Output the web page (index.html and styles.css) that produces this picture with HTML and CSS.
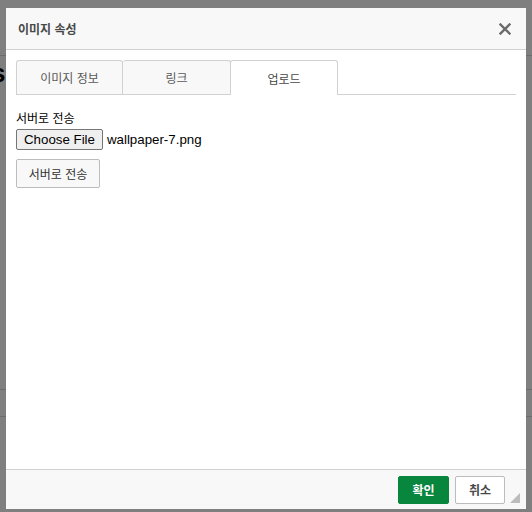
FILE: index.html
```html
<!DOCTYPE html>
<html lang="ko">
<head>
<meta charset="utf-8">
<title>이미지 속성</title>
<link rel="stylesheet" href="styles.css">
</head>
<body>
<div class="page">
  <div class="page-line page-line-top"></div>
  <div class="page-heading">s</div>
  <div class="page-line page-line-a"></div>
  <div class="page-line page-line-b"></div>
</div>
<div class="overlay"></div>
<div class="dialog">
  <div class="dlg-head">
    <span class="dlg-title">이미지 속성</span>
    <svg class="dlg-close" width="12" height="12" viewBox="0 0 12 12"><path d="M1.5 1.5 L10.5 10.5 M10.5 1.5 L1.5 10.5" stroke="#6b6b6b" stroke-width="2.4" stroke-linecap="square"/></svg>
  </div>
  <div class="dlg-body">
    <div class="tabs">
      <div class="tab tab-first">이미지 정보</div>
      <div class="tab">링크</div>
      <div class="tab tab-active">업로드</div>
    </div>
    <div class="panel">
      <div class="field-label">서버로 전송</div>
      <div class="file-row">
        <span class="file-btn">Choose File</span>
        <span class="file-name">wallpaper-7.png</span>
      </div>
      <span class="btn-send">서버로 전송</span>
    </div>
  </div>
  <div class="dlg-foot">
    <span class="btn btn-ok">확인</span>
    <span class="btn btn-cancel">취소</span>
    <span class="resize"></span>
  </div>
</div>
</body>
</html>
```
FILE: styles.css
```css
html, body {
  margin: 0;
  padding: 0;
}
body {
  width: 532px;
  height: 512px;
  overflow: hidden;
  position: relative;
  font-family: "Liberation Sans", Arial, "Noto Sans CJK KR", sans-serif;
  background: #fff;
}
.page {
  position: absolute;
  inset: 0;
}
.page-line {
  position: absolute;
  left: 0;
  right: 0;
  height: 1px;
  background: #d8d8d8;
}
.page-line-top { top: 55px; }
.page-line-a { top: 389px; }
.page-line-b { top: 416px; }
.page-heading {
  position: absolute;
  left: -9px;
  top: 58px;
  font: bold 26px "Liberation Sans", Arial, sans-serif;
  color: #000;
}
.overlay {
  position: absolute;
  inset: 0;
  background: rgba(0, 0, 0, 0.5);
}
.dialog {
  position: absolute;
  left: 6px;
  top: 8px;
  width: 520px;
  height: 501px;
  background: #fff;
  display: flex;
  flex-direction: column;
  font-family: "Liberation Sans", Arial, "Noto Sans CJK KR", sans-serif;
  color: #484848;
}
.dlg-head {
  height: 41px;
  background: #f8f8f8;
  border-bottom: 1px solid #d1d1d1;
  display: flex;
  align-items: center;
  justify-content: space-between;
  padding: 0 15px 0 12px;
}
.dlg-title {
  font-size: 12px;
  font-weight: bold;
  color: #484848;
}
.dlg-close {
  display: block;
}
.dlg-body {
  flex: 1;
  padding: 10px 10px 0 10px;
}
.tabs {
  display: flex;
  height: 35px;
  border-bottom: 1px solid #d1d1d1;
  box-sizing: border-box;
}
.tab {
  width: 108px;
  height: 34px;
  box-sizing: border-box;
  border: 1px solid #d1d1d1;
  border-bottom: none;
  border-left-width: 0;
  border-radius: 3px 3px 0 0;
  background: #f8f8f8;
  font-size: 12px;
  color: #595959;
  display: flex;
  align-items: center;
  justify-content: center;
}
.tab-first {
  width: 107px;
  border-left-width: 1px;
}
.tab-active {
  width: 108px;
  height: 35px;
  background: #fff;
  border-left-width: 1px;
  margin-left: -1px;
  color: #484848;
}
.panel {
  padding: 17px 0 0 0;
  display: flex;
  flex-direction: column;
  align-items: flex-start;
}
.field-label {
  font-size: 12px;
  color: #000;
  line-height: 15px;
}
.file-row {
  display: flex;
  align-items: center;
  margin-top: 2px;
}
.file-btn {
  display: inline-flex;
  align-items: center;
  height: 21px;
  box-sizing: border-box;
  padding: 0 7px;
  border: 1px solid #767676;
  border-radius: 2px;
  background: #efefef;
  font-size: 13.3px;
  color: #000;
}
.file-name {
  font-size: 13.3px;
  color: #000;
  margin-left: 4px;
}
.btn-send {
  margin-top: 9px;
  height: 29px;
  width: 84px;
  box-sizing: border-box;
  border: 1px solid #bcbcbc;
  border-radius: 2px;
  background: #f8f8f8;
  font-size: 12px;
  color: #333;
  display: flex;
  align-items: center;
  justify-content: center;
}
.dlg-foot {
  height: 39px;
  border-top: 1px solid #d1d1d1;
  background: #f8f8f8;
  display: flex;
  align-items: center;
  justify-content: flex-end;
  padding-right: 21px;
  position: relative;
}
.btn {
  height: 28px;
  box-sizing: border-box;
  border-radius: 2px;
  font-size: 12px;
  font-weight: bold;
  display: flex;
  align-items: center;
  justify-content: center;
}
.btn-ok {
  width: 51px;
  background: #09863e;
  border: 1px solid #09863e;
  color: #fff;
}
.btn-cancel {
  width: 50px;
  margin-left: 6px;
  background: #fff;
  border: 1px solid #bcbcbc;
  color: #484848;
}
.resize {
  position: absolute;
  right: 6px;
  bottom: 6px;
  width: 0;
  height: 0;
  border-left: 10px solid transparent;
  border-bottom: 10px solid #bcbcbc;
}
```
